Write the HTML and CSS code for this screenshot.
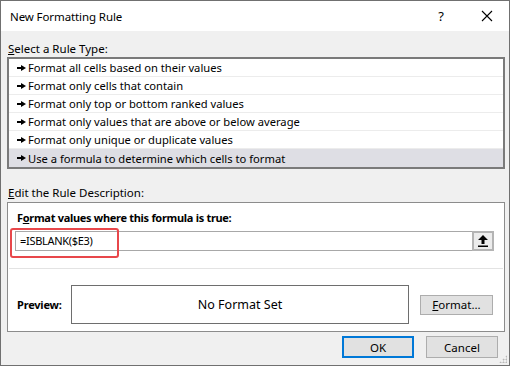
FILE: index.html
```html
<!DOCTYPE html>
<html lang="en">
<head>
    <meta charset="UTF-8">
    <title>New Formatting Rule</title>
    <link rel="stylesheet" href="styles.css">
</head>
<body>
    <div class="dialog">
        <div class="titlebar">
            <span class="title">New Formatting Rule</span>
            <span class="help">?</span>
            <svg class="close" width="12" height="12" viewBox="0 0 12 12">
                <path d="M1 1 L11 11 M11 1 L1 11" stroke="#000" stroke-width="1.1" fill="none"/>
            </svg>
        </div>

        <div class="content">
            <div class="label"><u>S</u>elect a Rule Type:</div>
            <ul class="rule-list">
                <li><span class="bullet"></span>Format all cells based on their values</li>
                <li><span class="bullet"></span>Format only cells that contain</li>
                <li><span class="bullet"></span>Format only top or bottom ranked values</li>
                <li><span class="bullet"></span>Format only values that are above or below average</li>
                <li><span class="bullet"></span>Format only unique or duplicate values</li>
                <li class="selected"><span class="bullet"></span>Use a formula to determine which cells to format</li>
            </ul>

            <div class="label label-edit"><u>E</u>dit the Rule Description:</div>
            <div class="desc">
                <div class="desc-title">F<u>o</u>rmat values where this formula is true:</div>
                <div class="formula-row">
                    <div class="formula-input">=ISBLANK($E3)</div>
                    <div class="collapse-btn">
                        <svg width="10" height="12" viewBox="0 0 10 12">
                            <path d="M5 0 L10 5 L6.5 5 L6.5 9 L3.5 9 L3.5 5 L0 5 Z" fill="#000"/>
                            <rect x="0" y="10.5" width="10" height="1.5" fill="#000"/>
                        </svg>
                    </div>
                    <div class="highlight"></div>
                </div>
                <div class="divider"></div>
                <div class="preview-row">
                    <div class="preview-label">Preview:</div>
                    <div class="preview-box">No Format Set</div>
                    <button class="btn format-btn"><u>F</u>ormat...</button>
                </div>
            </div>

            <div class="actions">
                <button class="btn btn-ok">OK</button>
                <button class="btn">Cancel</button>
            </div>
        </div>
        <div class="grip"></div>
    </div>
</body>
</html>
```

FILE: styles.css
```css
* {
    margin: 0;
    padding: 0;
    box-sizing: border-box;
}

body {
    font-family: "Noto Sans", "Open Sans", sans-serif;
    font-size: 11px;
    color: #000;
    background: #fff;
    overflow: hidden;
}

.dialog {
    position: relative;
    width: 510px;
    height: 366px;
    background: #f0f0f0;
    border: 1px solid #707070;
}

/* title bar */
.titlebar {
    height: 30px;
    background: #fff;
    display: flex;
    align-items: center;
    padding-left: 9px;
}

.title {
    flex: 1;
    font-size: 11.5px;
    letter-spacing: -0.1px;
}

.help {
    font-size: 13px;
    margin-right: 37px;
}

.close {
    margin-right: 16px;
}

.content {
    padding: 10px 4px 0 6px;
}

.label {
    line-height: 16px;
    padding-left: 1px;
    font-size: 11.5px;
}

.label-edit {
    margin-top: 16px;
    margin-bottom: 1px;
}

/* rule type list */
.rule-list {
    list-style: none;
    background: #fff;
    border: 2px solid #7a7a7a;
}

.rule-list li {
    height: 18px;
    display: flex;
    align-items: center;
    padding-left: 8px;
    border-bottom: 1px solid #ececec;
    font-size: 11.2px;
}

.rule-list li:last-child {
    border-bottom: none;
}

.rule-list li.selected {
    background: #dedee4;
}

.bullet {
    display: inline-flex;
    align-items: center;
    margin-right: 2px;
}

.bullet::before {
    content: "";
    width: 4px;
    height: 2px;
    background: #000;
}

.bullet::after {
    content: "";
    border-left: 5px solid #000;
    border-top: 3px solid transparent;
    border-bottom: 3px solid transparent;
}

/* rule description */
.desc {
    background: #fff;
    border: 1px solid #8c8c8c;
    padding: 7px 0 7px 0;
}

.desc-title {
    font-weight: bold;
    font-size: 11px;
    letter-spacing: -0.3px;
    line-height: 16px;
    padding-left: 9px;
    margin-bottom: 5px;
}

.formula-row {
    position: relative;
    display: flex;
    margin: 0 10px 0 7px;
    height: 20px;
}

.formula-input {
    flex: 1;
    border: 1px solid #a8a8a8;
    border-right: none;
    line-height: 18px;
    padding-left: 4px;
    letter-spacing: -0.3px;
}

.collapse-btn {
    width: 22px;
    background: #ececec;
    border: 2px solid #b4b4b4;
    display: flex;
    align-items: center;
    justify-content: center;
}

.highlight {
    position: absolute;
    left: -5px;
    top: -3px;
    width: 109px;
    height: 30px;
    border: 2.5px solid #e8474b;
    border-radius: 3px;
}

.divider {
    height: 1px;
    background: #e3e3e3;
    margin: 17px 1px 16px 1px;
}

.preview-row {
    display: flex;
    align-items: center;
}

.preview-label {
    font-weight: bold;
    width: 63px;
    padding-left: 9px;
    letter-spacing: -0.2px;
}

.preview-box {
    width: 338px;
    height: 39px;
    border: 1px solid #6e6e6e;
    display: flex;
    align-items: center;
    justify-content: center;
    font-size: 12.5px;
}

.btn {
    font-family: inherit;
    font-size: 11.5px;
    color: #000;
    background: #e1e1e1;
    border: 1px solid #adadad;
    height: 22px;
    width: 72px;
}

.format-btn {
    margin-left: 11px;
    width: 73px;
    height: 20px;
}

.actions {
    display: flex;
    justify-content: flex-end;
    gap: 12px;
    margin: 4px 7px 0 0;
}

.btn-ok {
    border: 2px solid #0078d7;
}

.grip {
    position: absolute;
    right: 2px;
    bottom: 2px;
    width: 8px;
    height: 8px;
    background: radial-gradient(circle, #b8b8b8 0.8px, transparent 1.2px) 0 0 / 3px 3px;
    clip-path: polygon(100% 0, 100% 100%, 0 100%);
}
```
